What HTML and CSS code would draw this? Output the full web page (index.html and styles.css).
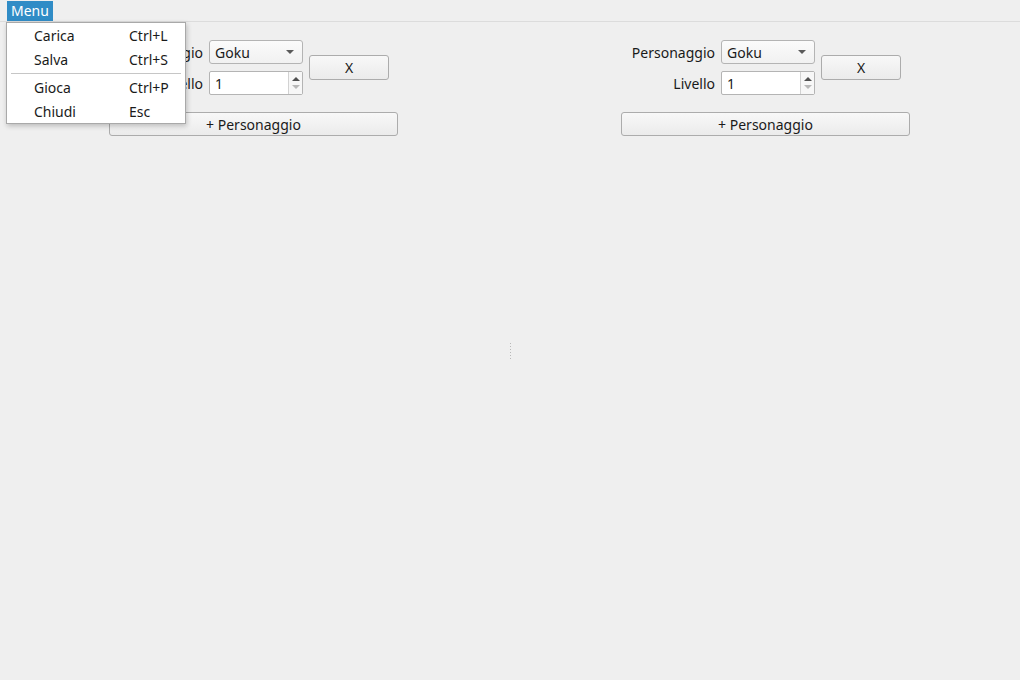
FILE: index.html
```html
<!DOCTYPE html>
<html lang="it">
<head>
<meta charset="utf-8">
<title>Menu</title>
<link rel="stylesheet" href="styles.css">
</head>
<body>
<div class="window">
  <div class="menubar">
    <span class="menubar-item active">Menu</span>
  </div>
  <div class="main">
    <div class="pane">
      <div class="panel">
        <div class="top-row">
          <div class="form">
            <span class="label">Personaggio</span>
            <div class="combo"><span>Goku</span><span class="combo-arrow"></span></div>
            <span class="label">Livello</span>
            <div class="spin"><span class="spin-value">1</span><span class="spin-arrows"><span class="arr up"></span><span class="arr down"></span></span></div>
          </div>
          <button class="btn btn-x">X</button>
        </div>
        <button class="btn btn-wide">+ Personaggio</button>
      </div>
    </div>
    <div class="splitter"><span class="handle"></span></div>
    <div class="pane">
      <div class="panel">
        <div class="top-row">
          <div class="form">
            <span class="label">Personaggio</span>
            <div class="combo"><span>Goku</span><span class="combo-arrow"></span></div>
            <span class="label">Livello</span>
            <div class="spin"><span class="spin-value">1</span><span class="spin-arrows"><span class="arr up"></span><span class="arr down"></span></span></div>
          </div>
          <button class="btn btn-x">X</button>
        </div>
        <button class="btn btn-wide">+ Personaggio</button>
      </div>
    </div>
  </div>

  <div class="popup">
    <div class="popup-item"><span class="pi-text">Carica</span><span class="pi-key">Ctrl+L</span></div>
    <div class="popup-item"><span class="pi-text">Salva</span><span class="pi-key">Ctrl+S</span></div>
    <div class="popup-sep"></div>
    <div class="popup-item"><span class="pi-text">Gioca</span><span class="pi-key">Ctrl+P</span></div>
    <div class="popup-item"><span class="pi-text">Chiudi</span><span class="pi-key">Esc</span></div>
  </div>
</div>
</body>
</html>
```
FILE: styles.css
```css
* { box-sizing: border-box; }
html, body {
  margin: 0;
  padding: 0;
  background: #efefef;
}
body {
  font-family: "Noto Sans", "DejaVu Sans", sans-serif;
  font-size: 14px;
  color: #1a1a1a;
}
.window {
  position: relative;
  width: 1020px;
  height: 680px;
  overflow: hidden;
}
.menubar {
  height: 22px;
  border-bottom: 1px solid #dcdcdc;
  padding: 1px 0 0 7px;
  display: flex;
}
.menubar-item {
  height: 20px;
  line-height: 19px;
  padding: 0 4px;
  width: 46px;
}
.menubar-item.active {
  background: #308cc6;
  color: #ffffff;
}
.main {
  display: flex;
  height: 658px;
}
.pane {
  flex: 1;
  display: flex;
  justify-content: center;
  align-items: flex-start;
  padding-top: 18px;
  padding-right: 2px;
}
.splitter {
  width: 4px;
  display: flex;
  align-items: center;
  justify-content: center;
}
.handle {
  width: 1px;
  height: 16px;
  background-image: linear-gradient(#b8b8b8 1px, transparent 1px);
  background-size: 1px 3px;
}
.panel {
  width: 288px;
  display: flex;
  flex-direction: column;
  gap: 17px;
}
.top-row {
  display: flex;
  align-items: center;
  gap: 6px;
}
.form {
  display: grid;
  grid-template-columns: 94px 94px;
  column-gap: 6px;
  row-gap: 7px;
  align-items: center;
}
.label {
  text-align: right;
  white-space: nowrap;
}
.combo {
  height: 24px;
  border: 1px solid #b4b4b4;
  border-radius: 3px;
  background: linear-gradient(#fbfbfb, #f1f1f1);
  display: flex;
  align-items: center;
  justify-content: space-between;
  padding: 0 8px 0 5px;
}
.combo-arrow {
  width: 0;
  height: 0;
  border-left: 4px solid transparent;
  border-right: 4px solid transparent;
  border-top: 4px solid #5a5a5a;
}
.spin {
  height: 24px;
  border: 1px solid #b4b4b4;
  border-radius: 2px;
  background: #ffffff;
  display: flex;
  align-items: stretch;
}
.spin-value {
  flex: 1;
  padding-left: 5px;
  display: flex;
  align-items: center;
}
.spin-arrows {
  width: 14px;
  border-left: 1px solid #d2d2d2;
  background: #f7f7f7;
  display: flex;
  flex-direction: column;
  align-items: center;
  justify-content: center;
  gap: 4px;
}
.arr {
  width: 0;
  height: 0;
  border-left: 4px solid transparent;
  border-right: 4px solid transparent;
}
.arr.up { border-bottom: 4px solid #505050; }
.arr.down { border-top: 4px solid #b8b8b8; }
.btn {
  font-family: inherit;
  font-size: 14px;
  color: #1a1a1a;
  border: 1px solid #acacac;
  border-radius: 3px;
  background: linear-gradient(#f8f8f8, #ebebeb);
  padding: 0;
  margin: 0;
}
.btn-x {
  width: 80px;
  height: 25px;
}
.btn-wide {
  width: 289px;
  height: 24px;
}
.popup {
  position: absolute;
  left: 6px;
  top: 22px;
  width: 180px;
  height: 102px;
  background: #ffffff;
  border: 1px solid #a9a9a9;
  box-shadow: 1px 2px 5px rgba(0, 0, 0, 0.22);
}
.popup-item {
  height: 24px;
  display: flex;
  align-items: center;
  padding-left: 27px;
}
.pi-text { width: 95px; }
.popup-sep {
  height: 4px;
  margin: 0 4px 0 4px;
  display: flex;
  align-items: center;
}
.popup-sep::before {
  content: "";
  display: block;
  width: 100%;
  height: 1px;
  background: #c6c6c6;
}
```
